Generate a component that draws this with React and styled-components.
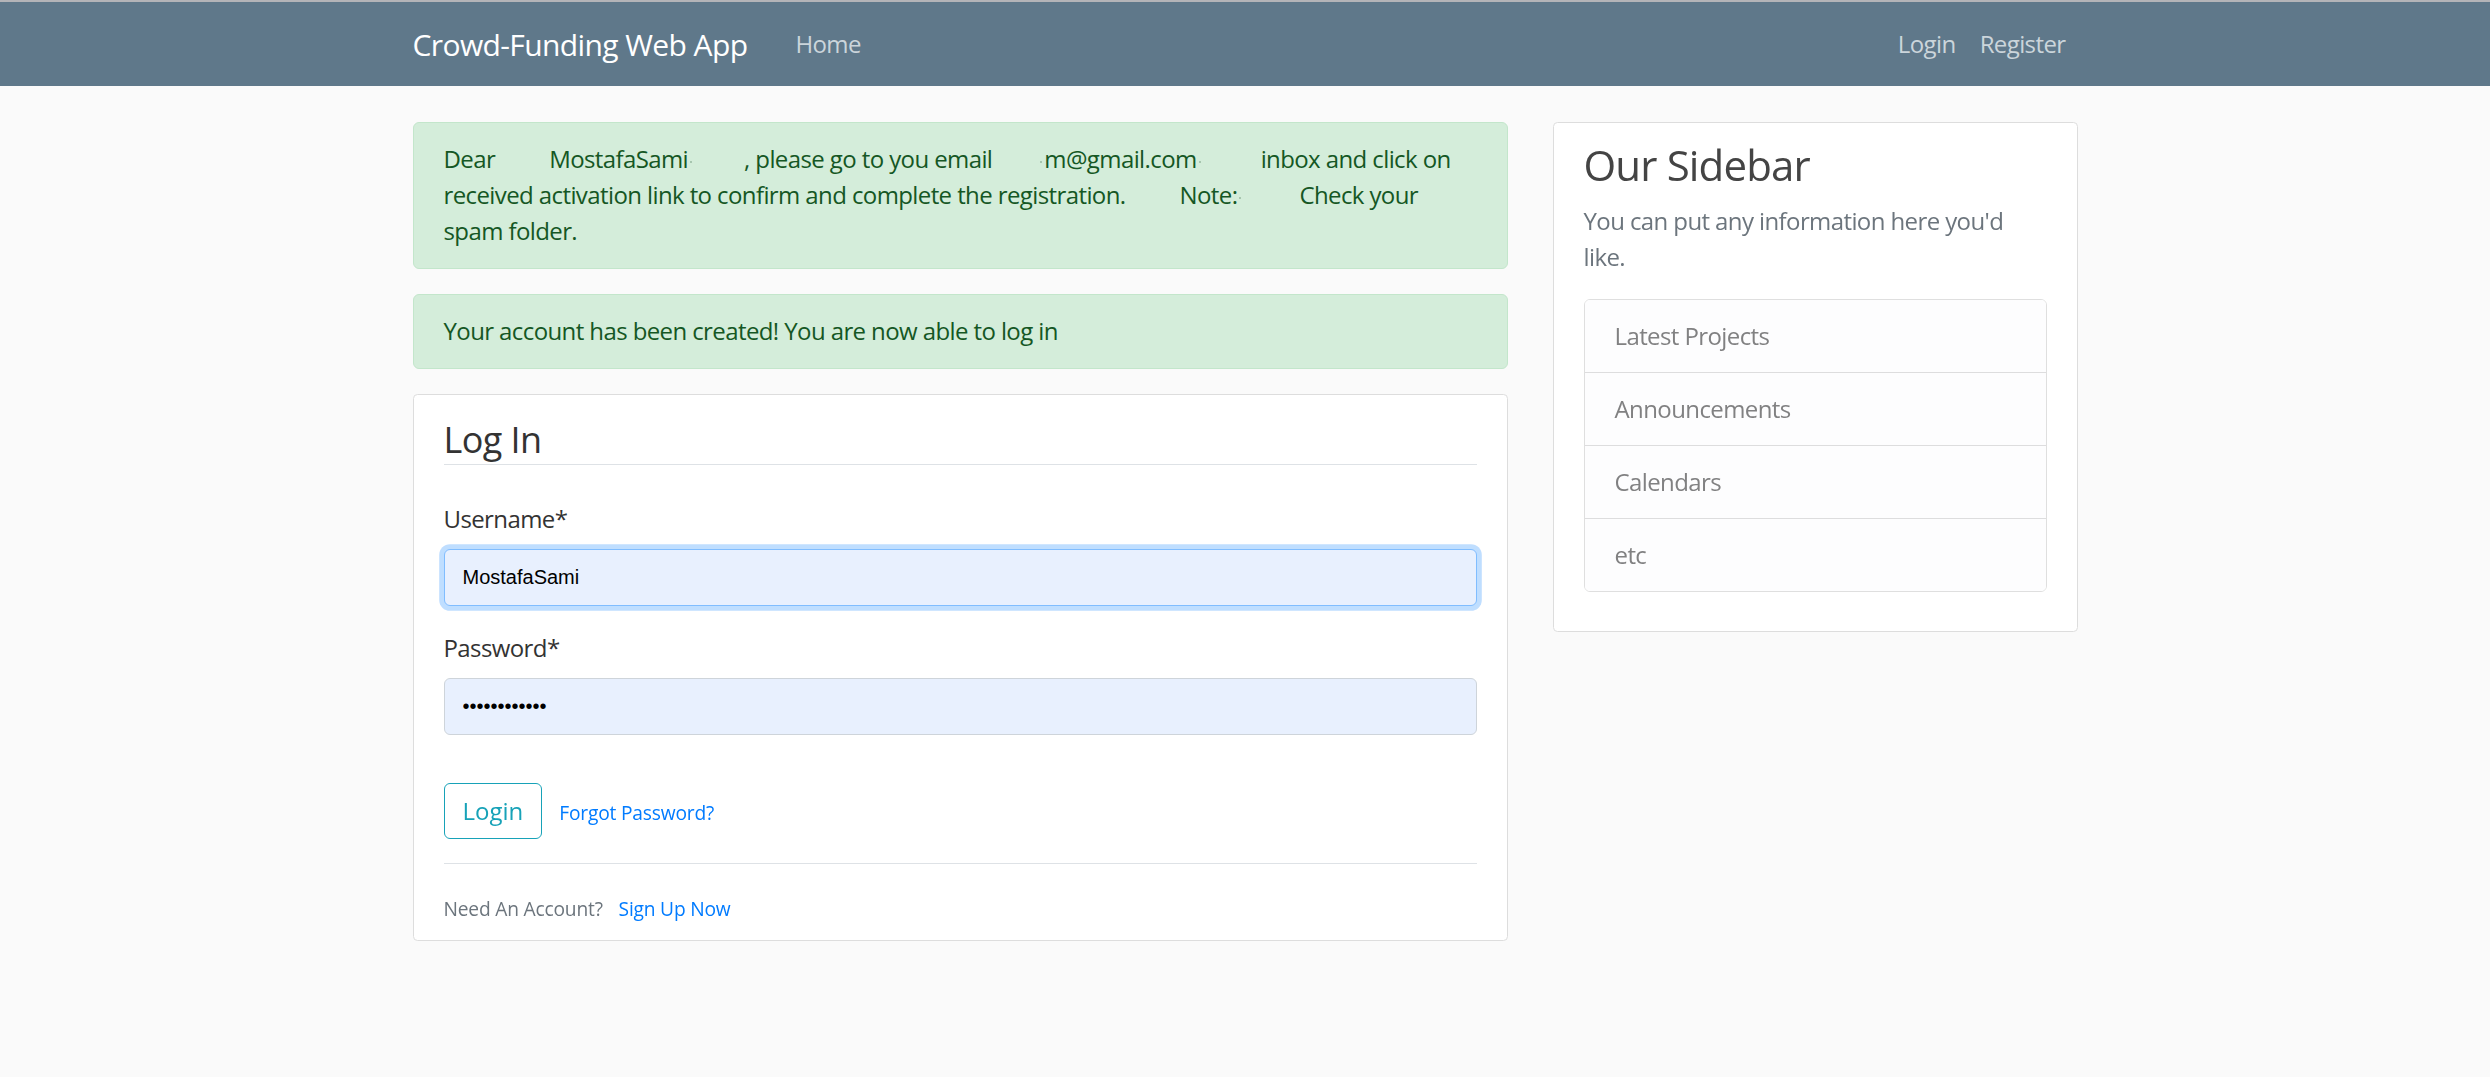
import React, { useEffect, useRef } from 'react';
import styled, { createGlobalStyle } from 'styled-components';

const GlobalStyle = createGlobalStyle`
  html, body {
    margin: 0;
    padding: 0;
  }
  body {
    background: #fafafa;
    color: #333333;
    font-family: "Open Sans", "Noto Sans", sans-serif;
    font-size: 24px;
    line-height: 1.5;
    letter-spacing: -0.025em;
  }
  *, *::before, *::after {
    box-sizing: border-box;
  }
`;

const sidebarItems = ['Latest Projects', 'Announcements', 'Calendars', 'etc'];

const App = () => {
  const usernameRef = useRef(null);

  // keep the caret at the start of the autofilled username, like the screenshot
  useEffect(() => {
    const el = usernameRef.current;
    if (el) {
      el.focus();
      el.setSelectionRange(0, 0);
    }
  }, []);

  return (
    <>
      <GlobalStyle />
      <Page>
        <Navbar>
          <NavContainer>
            <Brand href="#">Crowd-Funding Web App</Brand>
            <NavLink href="#">Home</NavLink>
            <NavRight>
              <NavLink href="#">Login</NavLink>
              <NavLink href="#">Register</NavLink>
            </NavRight>
          </NavContainer>
        </Navbar>

        <Main>
          <Column>
            <Alert>
              Dear<Gap $w={54} />MostafaSami<Dot /><Gap $w={50} />, please go to you email
              <Gap $w={46} /><Dot />m@gmail.com<Dot /><Gap $w={58} />inbox and click on received
              activation link to confirm and complete the registration.<Gap $w={54} />Note:<Dot />
              <Gap $w={56} />Check your spam folder.
            </Alert>
            <Alert>Your account has been created! You are now able to log in</Alert>

            <Section>
              <form onSubmit={(e) => e.preventDefault()}>
                <Legend>Log In</Legend>
                <FormGroup>
                  <Label>Username*</Label>
                  <Input ref={usernameRef} type="text" defaultValue="MostafaSami" $focused />
                </FormGroup>
                <FormGroup $mb={48}>
                  <Label>Password*</Label>
                  <Input type="password" defaultValue="MostafaSami1" />
                </FormGroup>
                <ButtonRow>
                  <OutlineButton type="submit">Login</OutlineButton>
                  <Small $ml={17}>
                    <Link href="#">Forgot Password?</Link>
                  </Small>
                </ButtonRow>
              </form>
              <Footer>
                <Small>
                  Need An Account? <Link href="#" $ml={11}>Sign Up Now</Link>
                </Small>
              </Footer>
            </Section>
          </Column>

          <Column>
            <Section>
              <SideTitle>Our Sidebar</SideTitle>
              <Muted>You can put any information here you'd like.</Muted>
              <ListGroup>
                {sidebarItems.map((item) => (
                  <ListItem key={item}>{item}</ListItem>
                ))}
              </ListGroup>
              <Spacer />
            </Section>
          </Column>
        </Main>
      </Page>
    </>
  );
};

export default App;

const Page = styled.div`
  min-height: 100vh;
  border-top: 2px solid #b4b4b8;
`;

const Navbar = styled.nav`
  background-color: #5f788a;
  padding: 12px 24px;
`;

const NavContainer = styled.div`
  width: 1710px;
  margin: 0 auto;
  padding: 0 22.5px;
  display: flex;
  align-items: center;
`;

const Brand = styled.a`
  color: #ffffff;
  font-size: 30px;
  line-height: 45px;
  padding: 7.5px 0;
  margin-right: 36px;
  text-decoration: none;
  white-space: nowrap;
  letter-spacing: -0.02em;
`;

const NavLink = styled.a`
  color: #cbd5db;
  padding: 12px;
  line-height: 36px;
  text-decoration: none;
`;

const NavRight = styled.div`
  margin-left: auto;
  display: flex;
`;

const Main = styled.main`
  width: 1665px;
  margin: 0 auto;
  padding-top: 36px;
  display: grid;
  grid-template-columns: 1095px 525px;
  column-gap: 45px;
  align-items: start;
`;

const Column = styled.div`
  min-width: 0;
`;

const Alert = styled.div`
  background-color: #d4edda;
  border: 1px solid #c3e6cb;
  color: #155724;
  padding: 18px 30px 19px;
  border-radius: 6px;
  margin-bottom: 25px;
`;

const Gap = styled.span`
  display: inline-block;
  width: ${(p) => p.$w}px;
`;

const Dot = styled.span`
  display: inline-block;
  width: 2px;
  height: 2px;
  margin: 0 2px;
  border-radius: 50%;
  background: #98b9a0;
  vertical-align: middle;
`;

const Section = styled.div`
  background: #ffffff;
  padding: 15px 30px;
  border: 1px solid #dddddd;
  border-radius: 4.5px;
  margin-bottom: 30px;
`;

const Legend = styled.div`
  font-size: 36px;
  line-height: 49px;
  padding-top: 5px;
  color: #333333;
  border-bottom: 1px solid #dee2e6;
  margin-bottom: 36px;
`;

const FormGroup = styled.div`
  margin-bottom: ${(p) => p.$mb || 24}px;
`;

const Label = styled.label`
  display: block;
  margin-bottom: 12px;
  line-height: 36px;
`;

const Input = styled.input`
  display: block;
  width: 100%;
  height: 57px;
  padding: 9px 18px;
  font-family: "Liberation Sans", Arial, sans-serif;
  font-size: 20px;
  letter-spacing: normal;
  color: #000000;
  caret-color: #000000;
  background-color: #e8f0fe;
  border: 1px solid ${(p) => (p.$focused ? '#80bdff' : '#ced4da')};
  border-radius: 6px;
  box-shadow: ${(p) => (p.$focused ? '0 0 0 4.8px rgba(0, 123, 255, 0.25)' : 'none')};
  outline: none;

  &:focus {
    border-color: #80bdff;
    box-shadow: 0 0 0 4.8px rgba(0, 123, 255, 0.25);
  }
`;

const ButtonRow = styled.div`
  display: flex;
  align-items: baseline;
  margin-bottom: 24px;
`;

const OutlineButton = styled.button`
  font-family: inherit;
  font-size: 24px;
  letter-spacing: normal;
  line-height: 36px;
  padding: 9px 18px;
  color: #17a2b8;
  background: transparent;
  border: 1px solid #17a2b8;
  border-radius: 6px;
  cursor: pointer;
`;

const Small = styled.small`
  font-size: 19.2px;
  letter-spacing: -0.01em;
  color: #6c757d;
  margin-left: ${(p) => p.$ml || 0}px;
`;

const Link = styled.a`
  color: #007bff;
  text-decoration: none;
  margin-left: ${(p) => p.$ml || 0}px;
`;

const Footer = styled.div`
  border-top: 1px solid #dee2e6;
  padding-top: 26px;
  line-height: 33px;
`;

const SideTitle = styled.h3`
  font-size: 42px;
  font-weight: 500;
  line-height: 1.2;
  letter-spacing: -0.02em;
  color: #444444;
  margin: 2px 0 12.5px;
`;

const Muted = styled.p`
  color: #6c757d;
  margin: 0 0 24px;
`;

const ListGroup = styled.ul`
  list-style: none;
  margin: 0;
  padding: 0;
  border: 1px solid rgba(0, 0, 0, 0.125);
  border-radius: 6px;
  overflow: hidden;
`;

const ListItem = styled.li`
  background-color: #fdfdfe;
  color: #818182;
  padding: 18px 30px;
  line-height: 36px;

  & + & {
    border-top: 1px solid rgba(0, 0, 0, 0.125);
  }
`;

const Spacer = styled.div`
  height: 24px;
`;
